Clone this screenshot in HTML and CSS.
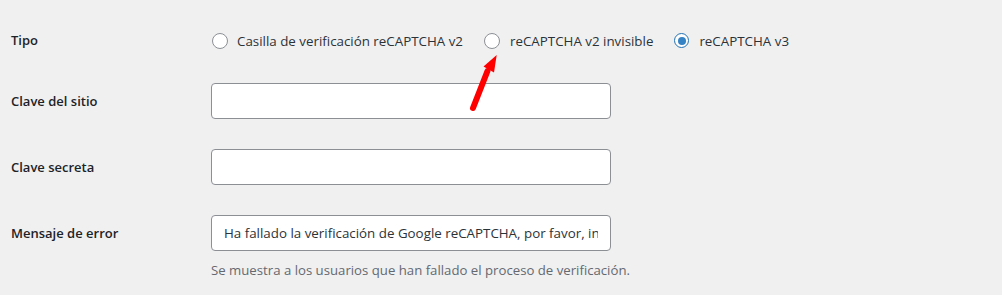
FILE: index.html
```html
<!DOCTYPE html>
<html lang="es">
<head>
<meta charset="utf-8">
<link rel="stylesheet" href="styles.css">
</head>
<body>
<div class="form">
  <div class="row row-radio">
    <div class="label">Tipo</div>
    <div class="field radios">
      <label class="radio"><span class="dot"></span>Casilla de verificación reCAPTCHA v2</label>
      <label class="radio"><span class="dot"></span>reCAPTCHA v2 invisible</label>
      <label class="radio"><span class="dot checked"></span>reCAPTCHA v3</label>
    </div>
  </div>
  <div class="row">
    <div class="label label-input">Clave del sitio</div>
    <div class="field"><input class="input" type="text" value=""></div>
  </div>
  <div class="row">
    <div class="label label-input">Clave secreta</div>
    <div class="field"><input class="input" type="text" value=""></div>
  </div>
  <div class="row">
    <div class="label label-input">Mensaje de error</div>
    <div class="field">
      <input class="input" type="text" value="Ha fallado la verificación de Google reCAPTCHA, por favor, inténtalo de nuevo.">
      <p class="description">Se muestra a los usuarios que han fallado el proceso de verificación.</p>
    </div>
  </div>
  <svg class="arrow" width="40" height="70" viewBox="0 0 40 70">
    <line x1="13" y1="53" x2="27.5" y2="16" stroke="#ff0000" stroke-width="6" stroke-linecap="round"/>
    <polygon points="36.7,0 23.5,11.5 34,17.5" fill="#ff0000"/>
  </svg>
</div>
</body>
</html>
```
FILE: styles.css
```css
html, body {
  margin: 0;
  padding: 0;
  background: #f0f0f1;
}
body {
  width: 1002px;
  height: 295px;
  overflow: hidden;
  font-family: "Open Sans", "Noto Sans", sans-serif;
  font-size: 13px;
  color: #1d2327;
}
.form {
  position: relative;
  padding: 12px 0 0 11px;
}
.row {
  display: grid;
  grid-template-columns: 200px 1fr;
  padding: 15px 0;
}
.row-radio {
  padding-top: 16px;
}
.label {
  font-weight: 600;
  font-size: 13px;
  line-height: 25px;
}
.label-input {
  line-height: 36px;
}
.radios {
  display: flex;
  align-items: center;
  gap: 20px;
  height: 25px;
}
.radio {
  display: flex;
  align-items: center;
  gap: 9px;
  font-size: 13.35px;
  color: #2c3338;
}
.radio + .radio .dot {
  margin-right: 1px;
}
.dot {
  width: 14px;
  height: 14px;
  border: 1px solid #8c8f94;
  border-radius: 50%;
  background: #fff;
  margin-left: 1px;
  box-sizing: content-box;
  position: relative;
}
.dot.checked {
  border-color: #2271b1;
  border-width: 1.5px;
  width: 13px;
  height: 13px;
}
.dot.checked::after {
  content: "";
  position: absolute;
  left: 2.5px;
  top: 2.5px;
  width: 8px;
  height: 8px;
  border-radius: 50%;
  background: #3582c4;
}
.input {
  display: block;
  box-sizing: border-box;
  width: 400px;
  height: 36px;
  margin: 0;
  background: #fff;
  border: 1px solid #8c8f94;
  border-radius: 4px;
  padding: 0 12px;
  font-family: "Open Sans", "Noto Sans", sans-serif;
  font-size: 13.35px;
  color: #2c3338;
  outline: none;
}
.description {
  margin: 10px 0 0;
  font-size: 13.2px;
  color: #646970;
  line-height: 18px;
}
.arrow {
  position: absolute;
  left: 460px;
  top: 55px;
}
```
